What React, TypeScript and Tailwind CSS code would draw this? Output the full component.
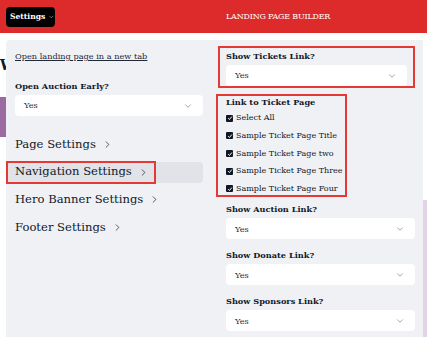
import { ChevronDown, ChevronRight } from "lucide-react";

const serif = { fontFamily: '"DejaVu Serif", "Liberation Serif", serif' };

function Select({ value = "Yes" }: { value?: string }) {
  return (
    <div className="flex h-[21px] items-center justify-between rounded-sm bg-white pl-[9px] pr-[10px] text-[8.2px] text-gray-800">
      <span>{value}</span>
      <ChevronDown size={10} strokeWidth={1.5} className="text-gray-500" />
    </div>
  );
}

function Field({ label }: { label: string }) {
  return (
    <div className="flex flex-col gap-[3px]">
      <div className="text-[8.2px] font-bold leading-[12px] text-gray-900">{label}</div>
      <Select />
    </div>
  );
}

function Check({ label }: { label: string }) {
  return (
    <div className="flex items-center gap-[3px] whitespace-nowrap text-[8px] leading-[12px] text-gray-900">
      <span className="flex h-[7px] w-[7px] items-center justify-center rounded-[1px] bg-gray-900">
        <svg viewBox="0 0 8 8" className="h-[6px] w-[6px]">
          <path d="M1.5 4.2 L3.3 6 L6.5 2" stroke="white" strokeWidth="1.3" fill="none" />
        </svg>
      </span>
      {label}
    </div>
  );
}

function MenuItem({ label, active }: { label: string; active?: boolean }) {
  return (
    <div className={`flex h-[21px] items-center rounded-sm ${active ? "bg-[#e1e3e8]" : ""}`}>
      <div
        className={`flex h-full items-center gap-[6px] pl-[8px] pr-[6px] text-[11.6px] text-gray-900 ${
          active ? "outline outline-2 -outline-offset-1 outline-[#e53935]" : ""
        }`}
      >
        {label}
        <ChevronRight size={11} strokeWidth={1.5} />
      </div>
    </div>
  );
}

export default function App() {
  return (
    <div className="relative h-[337px] w-[427px] overflow-hidden bg-white" style={serif}>
      <div className="flex h-[33px] items-center bg-[#dd2a2a] pl-[6px]">
        <button className="flex h-[20px] w-[49px] items-center gap-[3px] rounded-sm bg-black pl-[4px] text-[7.6px] font-bold text-white">
          Settings
          <ChevronDown size={8} strokeWidth={1.5} />
        </button>
        <div className="ml-[171px] text-[8px] tracking-tight text-white">LANDING PAGE BUILDER</div>
      </div>
      <div className="absolute left-0 top-[55px] text-[14px] font-bold text-gray-900">W</div>
      <div className="absolute left-0 top-[97px] h-[40px] w-[8px] bg-[#9b6aa0]" />
      <div className="absolute right-0 top-[200px] h-[137px] w-[4px] bg-[#e2d3e6]" />
      <div className="relative ml-[6px] mr-[4px] mt-[7px] flex h-[297px] gap-[17px] rounded-tl-sm bg-[#f0f1f5] pl-[1px] pr-[8px]">
        <div className="flex w-[196px] flex-col">
          <div className="ml-[8px] mt-[10px] text-[8.2px] leading-[12px] text-gray-800 underline">Open landing page in a new tab</div>
          <div className="ml-[8px] mt-[18px]">
            <Field label="Open Auction Early?" />
          </div>
          <div className="mt-[18px] flex flex-col gap-[6.7px]">
            <MenuItem label="Page Settings" />
            <MenuItem label="Navigation Settings" active />
            <MenuItem label="Hero Banner Settings" />
            <MenuItem label="Footer Settings" />
          </div>
        </div>
        <div className="flex flex-1 flex-col">
          <div className="ml-[-2px] mt-[6px] border-2 border-[#e53935] px-[6px] pb-[0px] pt-[2px]">
            <Field label="Show Tickets Link?" />
          </div>
          <div className="ml-[-4px] mt-[6px] flex w-[131px] flex-col gap-[5.7px] border-2 border-[#e53935] pl-[8px] pt-[1.5px]">
            <div className="text-[8.2px] font-bold leading-[9px] text-gray-900">Link to Ticket Page</div>
            <Check label="Select All" />
            <Check label="Sample Ticket Page Title" />
            <Check label="Sample Ticket Page two" />
            <Check label="Sample Ticket Page Three" />
            <Check label="Sample Ticket Page Four" />
          </div>
          <div className="ml-[6px] mt-[6.5px] flex flex-col gap-[10px]">
            <Field label="Show Auction Link?" />
            <Field label="Show Donate Link?" />
            <Field label="Show Sponsors Link?" />
          </div>
        </div>
      </div>
    </div>
  );
}
